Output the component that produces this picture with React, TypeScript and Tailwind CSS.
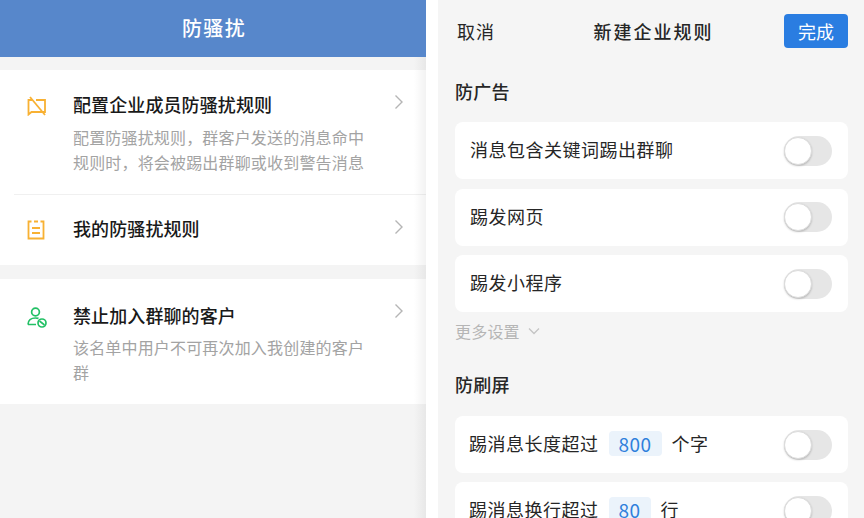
import type { ReactNode } from "react";

const font = { fontFamily: '"Noto Sans CJK SC", "Noto Sans", sans-serif' };

function Chevron() {
  return (
    <svg width="10" height="16" viewBox="0 0 10 16" fill="none" className="shrink-0">
      <path d="M1.5 1.5L8 8l-6.5 6.5" stroke="#b5b5b5" strokeWidth="1.4" />
    </svg>
  );
}

function MuteIcon() {
  return (
    <svg width="20" height="20" viewBox="0 0 20 20" fill="none" stroke="#f8b133" strokeWidth="1.8" className="mt-[4px]">
      <path d="M5 4H1.500v14.500L4.500 16H18V4H9" />
      <path d="M3 1l15 18" />
    </svg>
  );
}

function NoteIcon() {
  return (
    <svg width="18" height="20" viewBox="0 0 18 20" fill="none" stroke="#f8b133" strokeWidth="1.8" className="mt-[4px]">
      <path d="M4.500 1.500H1.500v17h15v-17h-3M7 1.500h4" />
      <path d="M5 8h8M5 13h8" />
    </svg>
  );
}

function BlockedUserIcon() {
  return (
    <svg width="20" height="21" viewBox="0 0 20 21" fill="none" stroke="#22c065" strokeWidth="1.7" className="mt-[4px]">
      <circle cx="8.500" cy="5" r="3.900" />
      <path d="M1 17.500c0-4 3-6.500 7.500-6.500 1.200 0 2.200.1 3 .4M1 17.500h8" />
      <circle cx="15" cy="16" r="4" />
      <path d="M12.500 14l5 4" />
    </svg>
  );
}

function MenuRow({
  icon,
  title,
  desc,
  className,
  chevronClass,
  descClass = "mt-[8px]",
}: {
  icon: ReactNode;
  title: string;
  desc?: string[];
  className: string;
  chevronClass: string;
  descClass?: string;
}) {
  return (
    <div className={`flex ${className}`}>
      <div className="w-[73px] h-[26px] shrink-0 flex items-center pl-[27px]">{icon}</div>
      <div className="flex-1">
        <div className="text-[18px] leading-[26px] font-medium tracking-[0.1px] text-[#191919]">{title}</div>
        {desc && (
          <div className={`${descClass} text-[16px] leading-[25px] tracking-[0.17px] text-[#a3a3a3]`}>
            {desc.map((line) => (
              <div key={line} className="whitespace-nowrap">{line}</div>
            ))}
          </div>
        )}
      </div>
      <div className={`pr-[22px] ${chevronClass}`}>
        <Chevron />
      </div>
    </div>
  );
}

function Toggle() {
  return (
    <div className="w-[48px] h-[30px] rounded-full bg-[#e6e6e6] shrink-0 flex items-center">
      <div className="w-[28px] h-[28px] rounded-full bg-white border border-[#dcdcdc] shadow-[0_1px_2px_rgba(0,0,0,0.2)]" />
    </div>
  );
}

function Chip({ value, className }: { value: string; className: string }) {
  return (
    <span className={`h-[25px] rounded-[4px] bg-[#ebf3fb] text-[#2f80dc] text-[19px] leading-[25px] text-center ${className}`}>
      {value}
    </span>
  );
}

function RuleCard({ children, className = "" }: { children: ReactNode; className?: string }) {
  return (
    <div className={`h-[57px] rounded-[8px] bg-white flex items-center justify-between pl-[15px] pr-[16px] ${className}`}>
      <div className="flex items-center pb-[2px] text-[18px] tracking-[0.5px] text-[#262626] whitespace-nowrap">{children}</div>
      <Toggle />
    </div>
  );
}

export default function App() {
  return (
    <div className="relative h-[518px] w-[864px] overflow-hidden bg-white flex" style={font}>
      {/* Left screen */}
      <div className="relative w-[426px] shrink-0 bg-[#f4f4f4]">
        <div className="h-[57px] bg-[#5787cb] flex items-center justify-center pl-[2px] pb-[1px] text-white text-[20px] font-medium tracking-[1.3px]">
          防骚扰
        </div>
        <div className="mt-[13px] bg-white">
          <MenuRow
            className="h-[124px] pt-[21px]"
            chevronClass="pt-[3px]"
            icon={<MuteIcon />}
            title="配置企业成员防骚扰规则"
            desc={["配置防骚扰规则，群客户发送的消息命中", "规则时，将会被踢出群聊或收到警告消息"]}
          />
          <div className="ml-[14px] h-px bg-[#f0f0f0]" />
          <MenuRow
            className="h-[70px] pt-[20px]"
            chevronClass="pt-[4px]"
            icon={<NoteIcon />}
            title="我的防骚扰规则"
          />
        </div>
        <div className="mt-[14px] bg-white">
          <MenuRow
            className="h-[125px] pt-[23px]"
            chevronClass="pt-[1px]"
            descClass="mt-[7px]"
            icon={<BlockedUserIcon />}
            title="禁止加入群聊的客户"
            desc={["该名单中用户不可再次加入我创建的客户", "群"]}
          />
        </div>
        {/* soft edge where the screen meets the next one */}
        <div className="absolute top-[57px] bottom-0 right-0 w-[12px] bg-gradient-to-r from-transparent to-[rgba(0,0,0,0.05)]" />
      </div>

      {/* Right screen */}
      <div className="ml-[12px] flex-1 bg-[#f5f5f5] pl-[17px] pr-[16px]">
        <div className="h-[62px] pt-[14px] flex items-start justify-between">
          <span className="w-[64px] pl-[2px] mt-[4px] text-[18px] leading-[26px] tracking-[1px] text-[#262626]">取消</span>
          <span className="mt-[4px] pl-[4px] text-[18px] leading-[26px] font-medium tracking-[2px] text-[#262626]">新建企业规则</span>
          <span className="w-[64px] h-[34px] rounded-[4px] bg-[#2a7de1] text-white text-[18px] leading-[34px] text-center">完成</span>
        </div>
        <div className="mt-[16px] h-[26px] text-[18px] leading-[26px] font-medium tracking-[0.2px] text-[#262626]">防广告</div>
        <div className="mt-[18px] flex flex-col gap-[9.500px]">
          <RuleCard>消息包含关键词踢出群聊</RuleCard>
          <RuleCard>踢发网页</RuleCard>
          <RuleCard>踢发小程序</RuleCard>
        </div>
        <div className="mt-[6px] h-[26px] flex items-center gap-[8px] text-[16px] tracking-[0.2px] text-[#b5b5b5]">
          更多设置
          <svg width="12" height="8" viewBox="0 0 12 8" fill="none">
            <path d="M1 1.500l5 5 5-5" stroke="#c4c4c4" strokeWidth="1.3" />
          </svg>
        </div>
        <div className="mt-[27px] h-[26px] text-[18px] leading-[26px] font-medium tracking-[0.2px] text-[#262626]">防刷屏</div>
        <div className="mt-[19px] flex flex-col gap-[9px]">
          <RuleCard>
            <span className="-ml-[1px]">踢消息长度超过</span>
            <Chip value="800" className="ml-[10px] w-[53px]" />
            <span className="ml-[10px]">个字</span>
          </RuleCard>
          <RuleCard>
            <span className="-ml-[1px]">踢消息换行超过</span>
            <Chip value="80" className="ml-[10px] w-[42px]" />
            <span className="ml-[10px]">行</span>
          </RuleCard>
        </div>
      </div>
    </div>
  );
}
